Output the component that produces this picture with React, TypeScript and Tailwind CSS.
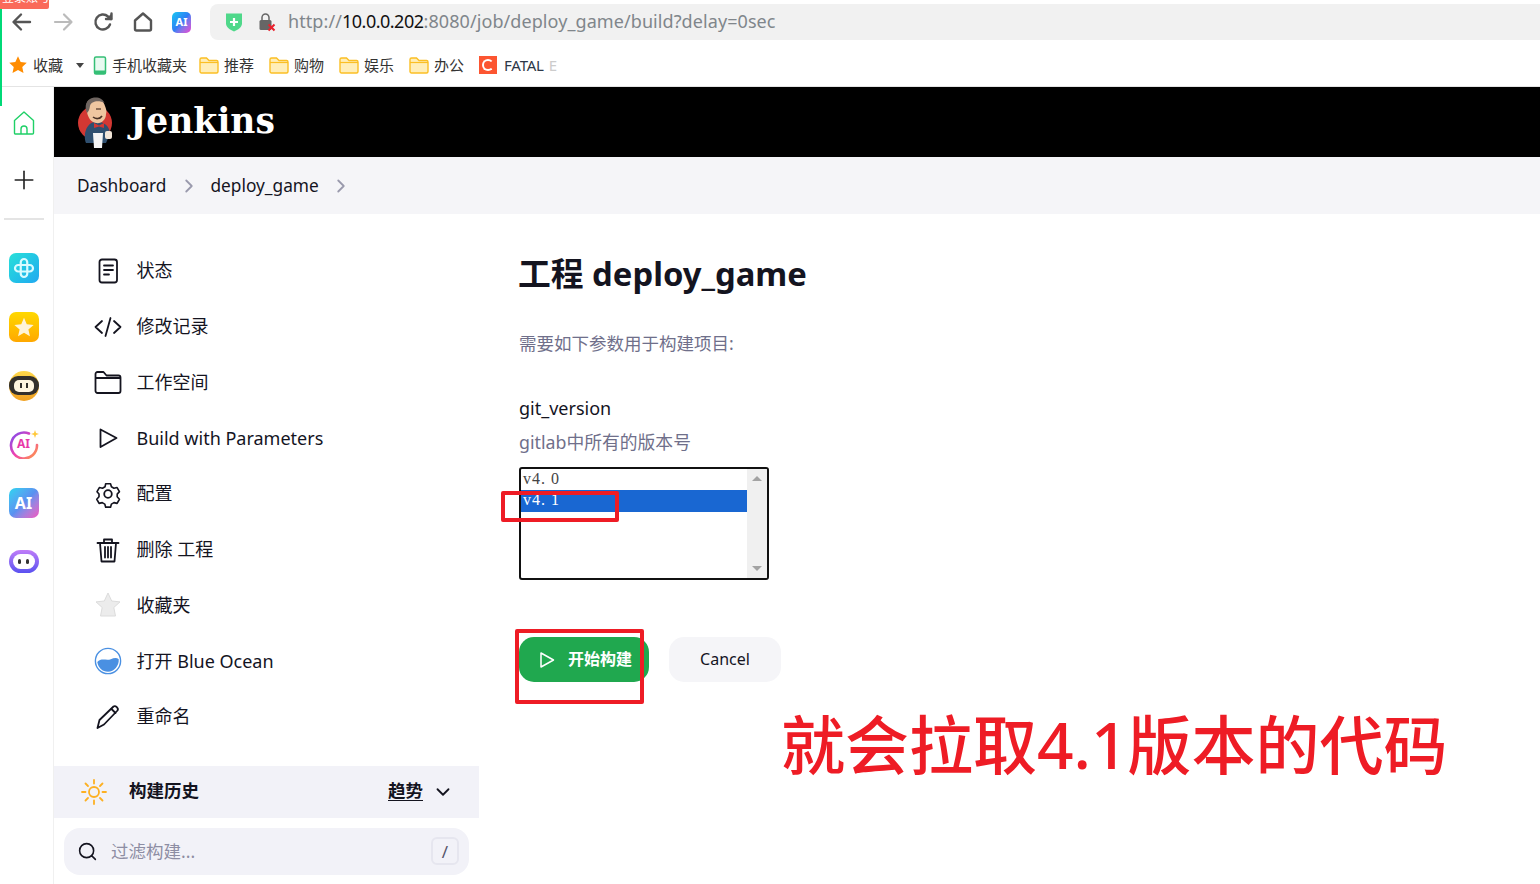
import React from 'react';
import { ChevronDown, ChevronRight, Search, Plus } from 'lucide-react';

const bookmarks = ['推荐', '购物', '娱乐', '办公'];

function FolderBookmark() {
  return (
    <svg width="20" height="18" viewBox="0 0 20 18">
      <path d="M1 3.5a1.5 1.5 0 0 1 1.5-1.5h5L10 4.5h7.5A1.5 1.5 0 0 1 19 6v9.5a1.5 1.5 0 0 1-1.5 1.5h-15A1.5 1.5 0 0 1 1 15.500z" fill="#ffeeb8" stroke="#fbbf24" strokeWidth="1.4" />
      <path d="M1 6.500h18" stroke="#fbbf24" strokeWidth="1.2" />
    </svg>
  );
}

function NavIcons() {
  return (
    <div className="flex items-center w-[210px] shrink-0 pl-[10px] gap-[16.500px]">
      <svg width="24" height="24" viewBox="0 0 24 24" fill="none" stroke="#555" strokeWidth="2.4" strokeLinecap="round" strokeLinejoin="round"><path d="M20 12H4M11 4.500 3.500 12l7.500 7.500" /></svg>
      <svg width="24" height="24" viewBox="0 0 24 24" fill="none" stroke="#bbb" strokeWidth="2.2" strokeLinecap="round" strokeLinejoin="round"><path d="M4 12h16M13 4.500l7.500 7.500-7.500 7.500" /></svg>
      <svg width="24" height="24" viewBox="0 0 24 24" fill="none" stroke="#555" strokeWidth="2.4" strokeLinecap="round" strokeLinejoin="round"><path d="M19 14.500A7.500 7.500 0 1 1 17 6.500L20 9" /><path d="M20.500 3.500V9h-5.500" fill="#555" /></svg>
      <svg width="22" height="24" viewBox="0 0 22 24" fill="none" stroke="#555" strokeWidth="2.4" strokeLinejoin="round"><path d="M3 10.500 11 3.500l8 7V19a1.500 1.500 0 0 1-1.500 1.500h-13A1.500 1.500 0 0 1 3 19z" /></svg>
      <div className="ml-[2px] w-[19px] h-[21px] rounded-[5px] bg-gradient-to-br from-[#18c8f0] via-[#2f7df5] to-[#e83ad0] flex items-center justify-center text-white text-[11px] font-bold">AI</div>
    </div>
  );
}

function BrowserChrome() {
  return (
    <>
      <div className="h-[44px] flex items-center">
        <NavIcons />
        <div className="flex-1 h-[36px] rounded-l-[8px] bg-[#f1f1f1] flex items-center pl-[14px]">
          <svg width="20" height="22" viewBox="0 0 20 22">
            <path d="M2 2.500h16v10c0 3.500-4 6.500-8 8-4-1.500-8-4.500-8-8z" fill="#4fd88a" />
            <path d="M10 7v8M6 11h8" stroke="#fff" strokeWidth="2.200" />
          </svg>
          <svg className="ml-[14px]" width="18" height="20" viewBox="0 0 18 20">
            <path d="M4 8V5.500a3.500 3.500 0 0 1 7 0V8" fill="none" stroke="#666" strokeWidth="1.500" />
            <rect x="1.500" y="8" width="12" height="10" rx="1.500" fill="#666" />
            <path d="M10.500 12.500l6 6M16.500 12.500l-6 6" stroke="#e8202c" strokeWidth="2" />
          </svg>
          <div className="ml-[12px] -mt-[1px] text-[18px] tracking-[0.08px] text-[#80868b] whitespace-nowrap">
            http://<span className="text-[#111] tracking-[-0.5px]">10.0.0.202</span>:8080/job/deploy_game/build?delay=0sec
          </div>
        </div>
      </div>
      <div className="h-[43px] flex items-center pl-[8px] border-b border-[#e4e4e4] text-[15px] text-[#333]">
        <svg width="20" height="20" viewBox="0 0 24 24"><path d="M12 1.500l3.200 7 7.300.8-5.400 5 1.500 7.400L12 18l-6.600 3.700 1.500-7.400-5.400-5 7.300-.8z" fill="#ff8c00" /></svg>
        <span className="ml-[5px]">收藏</span>
        <span className="ml-[13px] w-0 h-0 border-x-[4px] border-x-transparent border-t-[5px] border-t-[#444]" />
        <svg className="ml-[9px]" width="14" height="19" viewBox="0 0 13 19">
          <rect x="1" y="1" width="11" height="17" rx="1.500" fill="#e9faf1" stroke="#35bf76" strokeWidth="1.500" />
          <rect x="1" y="14.500" width="11" height="3.500" fill="#35bf76" />
        </svg>
        <span className="ml-[5px] w-[87px] whitespace-nowrap">手机收藏夹</span>
        {bookmarks.map((b) => (
          <div key={b} className="flex items-center w-[70px] gap-[5px]">
            <FolderBookmark />
            <span>{b}</span>
          </div>
        ))}
        <div className="w-[18px] h-[18px] bg-[#fc5531] flex items-center justify-center">
          <span className="w-[12px] h-[12px] rounded-full border-2 border-white border-r-transparent" />
        </div>
        <span className="ml-[7px] text-[#2d3748] tracking-[-0.2px]">FATAL</span>
        <span className="ml-[5px] text-[#ccc]">E</span>
      </div>
    </>
  );
}

function RailIcons() {
  return (
    <div className="flex flex-col items-center gap-[28.800px] mt-[33px]">
      <div className="w-[30px] h-[30px] rounded-[7px] bg-gradient-to-br from-[#2be0d8] to-[#22a8f0] flex items-center justify-center">
        <svg width="22" height="22" viewBox="0 0 22 22" fill="none" stroke="#d8fbff" strokeWidth="2.200">
          <rect x="2" y="8" width="18" height="6.500" rx="3.250" />
          <rect x="7.750" y="2" width="6.500" height="18" rx="3.250" />
        </svg>
      </div>
      <div className="w-[30px] h-[30px] rounded-[7px] bg-gradient-to-b from-[#ffd800] to-[#ffa800] flex items-center justify-center">
        <svg width="22" height="22" viewBox="0 0 24 24"><path d="M12 2l3 7 7.500.7-5.700 5 1.700 7.300L12 18.200 5.500 22l1.700-7.300-5.700-5L9 9z" fill="#fff4d8" /></svg>
      </div>
      <div className="relative w-[30px] h-[30px] rounded-full bg-gradient-to-b from-[#ffd84a] to-[#f0a020] flex items-center justify-center">
        <div className="w-[30px] h-[19px] rounded-[9px] bg-[#33302c] flex items-center justify-center">
          <div className="w-[20px] h-[12px] rounded-[5px] bg-[#fff6e0] flex items-center justify-center gap-[4px]">
            <span className="w-[2px] h-[5px] bg-[#33302c]" />
            <span className="w-[2px] h-[5px] bg-[#33302c]" />
          </div>
        </div>
      </div>
      <div className="relative w-[30px] h-[30px] flex items-center justify-center">
        <svg width="30" height="30" viewBox="0 0 30 30" fill="none">
          <defs>
            <linearGradient id="aiRing" x1="0" y1="0" x2="1" y2="1">
              <stop offset="0" stopColor="#7a4df0" />
              <stop offset="0.5" stopColor="#f040b0" />
              <stop offset="1" stopColor="#ffa040" />
            </linearGradient>
          </defs>
          <path d="M20 4.500A13 13 0 1 0 28 16" stroke="url(#aiRing)" strokeWidth="2.600" strokeLinecap="round" />
          <path d="M26 1l1 3 3 1-3 1-1 3-1-3-3-1 3-1z" fill="#ffc83a" />
        </svg>
        <span className="absolute text-[12px] font-bold text-[#e838a8]">AI</span>
      </div>
      <div className="w-[30px] h-[30px] rounded-[7px] bg-gradient-to-br from-[#25d5f0] via-[#5a90f0] to-[#f050c0] flex items-center justify-center text-white text-[16px] font-bold">AI</div>
      <div className="h-[30px] flex items-center">
        <div className="w-[30px] h-[23px] rounded-[12px] bg-gradient-to-b from-[#c07cf8] to-[#5a50f0] flex items-center justify-center">
          <div className="w-[22px] h-[15px] rounded-[8px] bg-white flex items-center justify-center gap-[5px]">
            <span className="w-[3px] h-[5px] rounded-full bg-[#333]" />
            <span className="w-[3px] h-[5px] rounded-full bg-[#333]" />
          </div>
        </div>
      </div>
    </div>
  );
}

function LeftRail() {
  return (
    <div className="w-[54px] shrink-0 border-r border-[#f0f0f0] flex flex-col items-center pr-[6px]">
      <svg className="mt-[23px]" width="24" height="26" viewBox="0 0 24 26" fill="none" stroke="#1fd067" strokeWidth="1.400" strokeLinejoin="round">
        <path d="M2.500 10.500 12 2l9.500 8.500V23a1 1 0 0 1-1 1h-17a1 1 0 0 1-1-1z" />
        <path d="M9 24v-5a3 3 0 0 1 6 0v5" />
      </svg>
      <Plus className="mt-[29px]" size={30} strokeWidth={1.300} color="#222" />
      <div className="mt-[23px] w-[40px] h-[2px] bg-[#e4e4e4]" />
      <RailIcons />
    </div>
  );
}

function JenkinsLogo() {
  return (
    <svg width="37" height="53" viewBox="0 0 37 53">
      <circle cx="18" cy="27" r="17" fill="#d33833" />
      <path d="M9 47c-3-8 0-20 9-21 8-1 15 4 15 12l-4 9z" fill="#2f4f6f" />
      <path d="M11 5c6-4 15-3 17 5 1 3 2 5 1 8 0 6-5 10-10 9-5-1-8-5-9-11C9 11 9 8 11 5z" fill="#efc6a0" />
      <path d="M10 17C7 10 9 3 17 1.500 22 1 26 3 27.500 7 22 4 14 5 13 10c-.5 3-1 5-3 7z" fill="#6f6560" />
      <path d="M16 21c3 2.500 7 2 9-1" stroke="#4a3226" strokeWidth="1.600" fill="none" />
      <path d="M19 13h5" stroke="#4a3226" strokeWidth="1.200" />
      <path d="M17 27l5 2.500 5-2.500v5l-5-1.500-5 1.500z" fill="#d33833" />
      <path d="M16 37h10l-1 15h-8z" fill="#f4f4f4" />
      <rect x="28" y="35" width="7" height="8" rx="2" fill="#f1e5d8" />
    </svg>
  );
}

function ItemIcon({ name }: { name: string }) {
  const stroke = { fill: 'none', stroke: '#14141f', strokeWidth: 1.8, strokeLinecap: 'round' as const, strokeLinejoin: 'round' as const };
  switch (name) {
    case 'status':
      return <svg width="28" height="28" viewBox="0 0 28 28" {...stroke}><rect x="5.500" y="2.500" width="17.500" height="23" rx="2.500" /><path d="M10 8.500h9M10 13h9M10 17.500h5" /></svg>;
    case 'code':
      return <svg width="28" height="28" viewBox="0 0 28 28" {...stroke}><path d="M8 8 1.500 14 8 20M20 8l6.500 6-6.500 6M16.500 5l-5 18" /></svg>;
    case 'folder':
      return <svg width="28" height="28" viewBox="0 0 28 28" {...stroke}><path d="M1.500 6a2 2 0 0 1 2-2h6l3 3.500h12a2 2 0 0 1 2 2V23a2 2 0 0 1-2 2h-21a2 2 0 0 1-2-2zM1.500 10h25" /></svg>;
    case 'play':
      return <svg width="28" height="28" viewBox="0 0 28 28" {...stroke}><path d="M6.500 5.500 22.500 14l-16 9z" /></svg>;
    case 'gear':
      return <svg width="28" height="28" viewBox="0 0 28 28" {...stroke}><path d="M11.300 2.500h5.400l1 3.400 2.800 1.600 3.500-.8 2.600 4.600-2.500 2.700v3l2.500 2.700-2.600 4.600-3.500-.8-2.800 1.600-1 3.400h-5.400l-1-3.400-2.800-1.600-3.500.8-2.600-4.600 2.500-2.700v-3L1.700 11.300l2.600-4.600 3.500.8 2.800-1.600z" transform="translate(1.500 1.500) scale(.9)" /><circle cx="14" cy="14" r="3.800" /></svg>;
    case 'trash':
      return <svg width="28" height="28" viewBox="0 0 28 28" {...stroke}><path d="M3.500 7h21M10 6.500V3.500h8v3M6 7l1.500 18.500h13L22 7M11 11v10.500M14 11v10.500M17 11v10.500" /></svg>;
    case 'star':
      return <svg width="28" height="28" viewBox="0 0 28 28"><path d="M14 2l3.700 8 8.300.9-6.200 5.600 1.700 8.500H6.500l1.700-8.500L2 10.900l8.300-.9z" fill="#ececec" stroke="#dcdcdc" /></svg>;
    case 'ocean':
      return <svg width="30" height="30" viewBox="0 0 30 30"><circle cx="15" cy="15" r="13.500" fill="#fff" stroke="#4a90e2" strokeWidth="1.500" /><path d="M3.500 16C8 11 13 15 18 13c3-1 6-2 8.500 0 .5 7-5 13.500-11.500 13.500C9 26.500 4.500 22 3.500 16z" fill="#4a90e2" /></svg>;
    default:
      return <svg width="28" height="28" viewBox="0 0 28 28" {...stroke}><path d="M3.500 25 5.500 17 19.500 3.500c2-1.500 5.500 2 4 4L10 21.500z" /><path d="M17.500 6l4 4" /></svg>;
  }
}

const items = [
  { icon: 'status', label: '状态' },
  { icon: 'code', label: '修改记录' },
  { icon: 'folder', label: '工作空间' },
  { icon: 'play', label: 'Build with Parameters' },
  { icon: 'gear', label: '配置' },
  { icon: 'trash', label: '删除 工程' },
  { icon: 'star', label: '收藏夹' },
  { icon: 'ocean', label: '打开 Blue Ocean' },
  { icon: 'pen', label: '重命名' },
];

function Sidebar() {
  return (
    <div className="w-[425px] shrink-0 pt-[29px]">
      {items.map((it) => (
        <div key={it.label} className="h-[55.75px] flex items-center pl-[40px] text-[18px] text-[#14141f]">
          <div className="w-[28px] flex justify-center">
            <ItemIcon name={it.icon} />
          </div>
          <span className="ml-[14.500px]">{it.label}</span>
        </div>
      ))}
      <div className="mt-[21px] h-[52px] bg-[#f2f2f8] flex items-center pl-[26px] pr-[25px] text-[#14141f]">
        <svg width="28" height="28" viewBox="0 0 28 28" fill="none" stroke="#fdb022" strokeWidth="1.800" strokeLinecap="round">
          <circle cx="14" cy="14" r="5" />
          <path d="M14 2v3.500M14 22.500V26M2 14h3.500M22.500 14H26M5.500 5.500 8 8M20 20l2.500 2.500M5.500 22.500 8 20M20 8l2.500-2.500" />
        </svg>
        <span className="ml-[21px] -mt-[3px] text-[17.500px] font-bold">构建历史</span>
        <span className="ml-auto -mt-[3px] text-[17.500px] font-bold underline underline-offset-[3px]">趋势</span>
        <ChevronDown className="ml-[9px]" size={22} strokeWidth={2} />
      </div>
      <div className="mt-[10px] mx-[10px] h-[47px] rounded-[16px] bg-[#f2f2f8] flex items-center pl-[13px] pr-[10px]">
        <Search size={21} strokeWidth={1.800} color="#14141f" />
        <span className="ml-[13px] text-[17.500px] text-[#8d8da3]">过滤构建...</span>
        <span className="ml-auto w-[28px] h-[28px] rounded-[6px] border-2 border-[#e6e6ef] flex items-center justify-center text-[17px] text-[#55556a]">/</span>
      </div>
    </div>
  );
}

function VersionList() {
  return (
    <div className="mt-[11px] w-[250px] h-[113px] border-2 border-[#111] rounded-[3px] flex overflow-hidden font-['Liberation_Serif','Noto_Serif_CJK_SC',serif] text-[16px] tracking-[1px]">
      <div className="flex-1">
        <div className="h-[21px] pl-[2px] leading-[19px] text-[#444]">v4. 0</div>
        <div className="h-[22px] pl-[2px] leading-[19px] bg-[#1967d2] text-white">v4. 1</div>
      </div>
      <div className="w-[20px] bg-[#f0f0f0] flex flex-col items-center justify-between py-[7px]">
        <span className="w-0 h-0 border-x-[5px] border-x-transparent border-b-[5px] border-b-[#a3a3a3]" />
        <span className="w-0 h-0 border-x-[5px] border-x-transparent border-t-[5px] border-t-[#a3a3a3]" />
      </div>
    </div>
  );
}

function MainPanel() {
  return (
    <div className="pl-[40px] pt-[36px] flex-1">
      <h1 className="-ml-[1px] text-[32.800px] leading-[48px] font-bold text-[#14141f]">工程 deploy_game</h1>
      <p className="mt-[31px] text-[17.500px] leading-[28px] text-[#6f6f8a]">需要如下参数用于构建项目:</p>
      <p className="mt-[37px] text-[18px] leading-[28px] text-[#14141f]">git_version</p>
      <p className="mt-[6px] text-[17.800px] leading-[28px] text-[#6f6f8a]">gitlab中所有的版本号</p>
      <VersionList />
      <div className="mt-[57px] flex gap-[20px]">
        <div className="w-[130px] h-[45px] rounded-[15px] bg-[#20a84f] flex items-center pl-[20px] text-white">
          <svg width="16" height="18" viewBox="0 0 16 18" fill="none" stroke="#fff" strokeWidth="1.500" strokeLinejoin="round"><path d="M2 2l12.500 7L2 16z" /></svg>
          <span className="ml-[13px] -mt-[2px] text-[16px] font-bold">开始构建</span>
        </div>
        <div className="w-[112px] h-[45px] rounded-[15px] bg-[#f5f5f8] flex items-center justify-center text-[16px] text-[#14141f] pb-[1px]">Cancel</div>
      </div>
    </div>
  );
}

export default function App() {
  return (
    <div className="relative w-[1540px] h-[884px] overflow-hidden bg-white font-['Noto_Sans','Noto_Sans_CJK_SC',sans-serif]">
      <BrowserChrome />
      <div className="flex h-[797px]">
        <LeftRail />
        <div className="flex-1 flex flex-col min-w-0">
          <div className="h-[70px] bg-black flex items-center pl-[23px] shrink-0">
            <JenkinsLogo />
            <span className="ml-[16px] font-['DejaVu_Serif',serif] font-bold text-[34.500px] text-white">Jenkins</span>
          </div>
          <div className="h-[57px] bg-[#f5f5f8] flex items-center pl-[23px] text-[17.300px] text-[#14141f] shrink-0">
            <span>Dashboard</span>
            <ChevronRight className="ml-[12px]" size={22} color="#9a9aad" strokeWidth={2} />
            <span className="ml-[10px]">deploy_game</span>
            <ChevronRight className="ml-[11px]" size={22} color="#9a9aad" strokeWidth={2} />
          </div>
          <div className="flex flex-1">
            <Sidebar />
            <MainPanel />
          </div>
        </div>
      </div>

      {/* screenshot annotations on top of the page */}
      <div className="absolute left-0 top-0 w-[2px] h-[106px] bg-[#00d977]" />
      <div className="absolute left-0 top-0 w-[49px] h-[9px] overflow-hidden rounded-br-[2px] bg-[#fa6a5a]">
        <div className="-mt-[9px] pl-[2px] text-[12px] leading-[14px] text-white whitespace-nowrap">登录账号</div>
      </div>
      <div className="absolute left-[501px] top-[491px] w-[118px] h-[31px] border-[4px] border-[#ee1c25] rounded-[2px]" />
      <div className="absolute left-[515px] top-[629px] w-[129px] h-[75px] border-[4px] border-[#ee1c25] rounded-[2px]" />
      <div className="absolute left-[781px] top-[698px] text-[64px] font-medium leading-[94px] text-[#ee1c25] whitespace-nowrap">就会拉取4.1版本的代码</div>
    </div>
  );
}
